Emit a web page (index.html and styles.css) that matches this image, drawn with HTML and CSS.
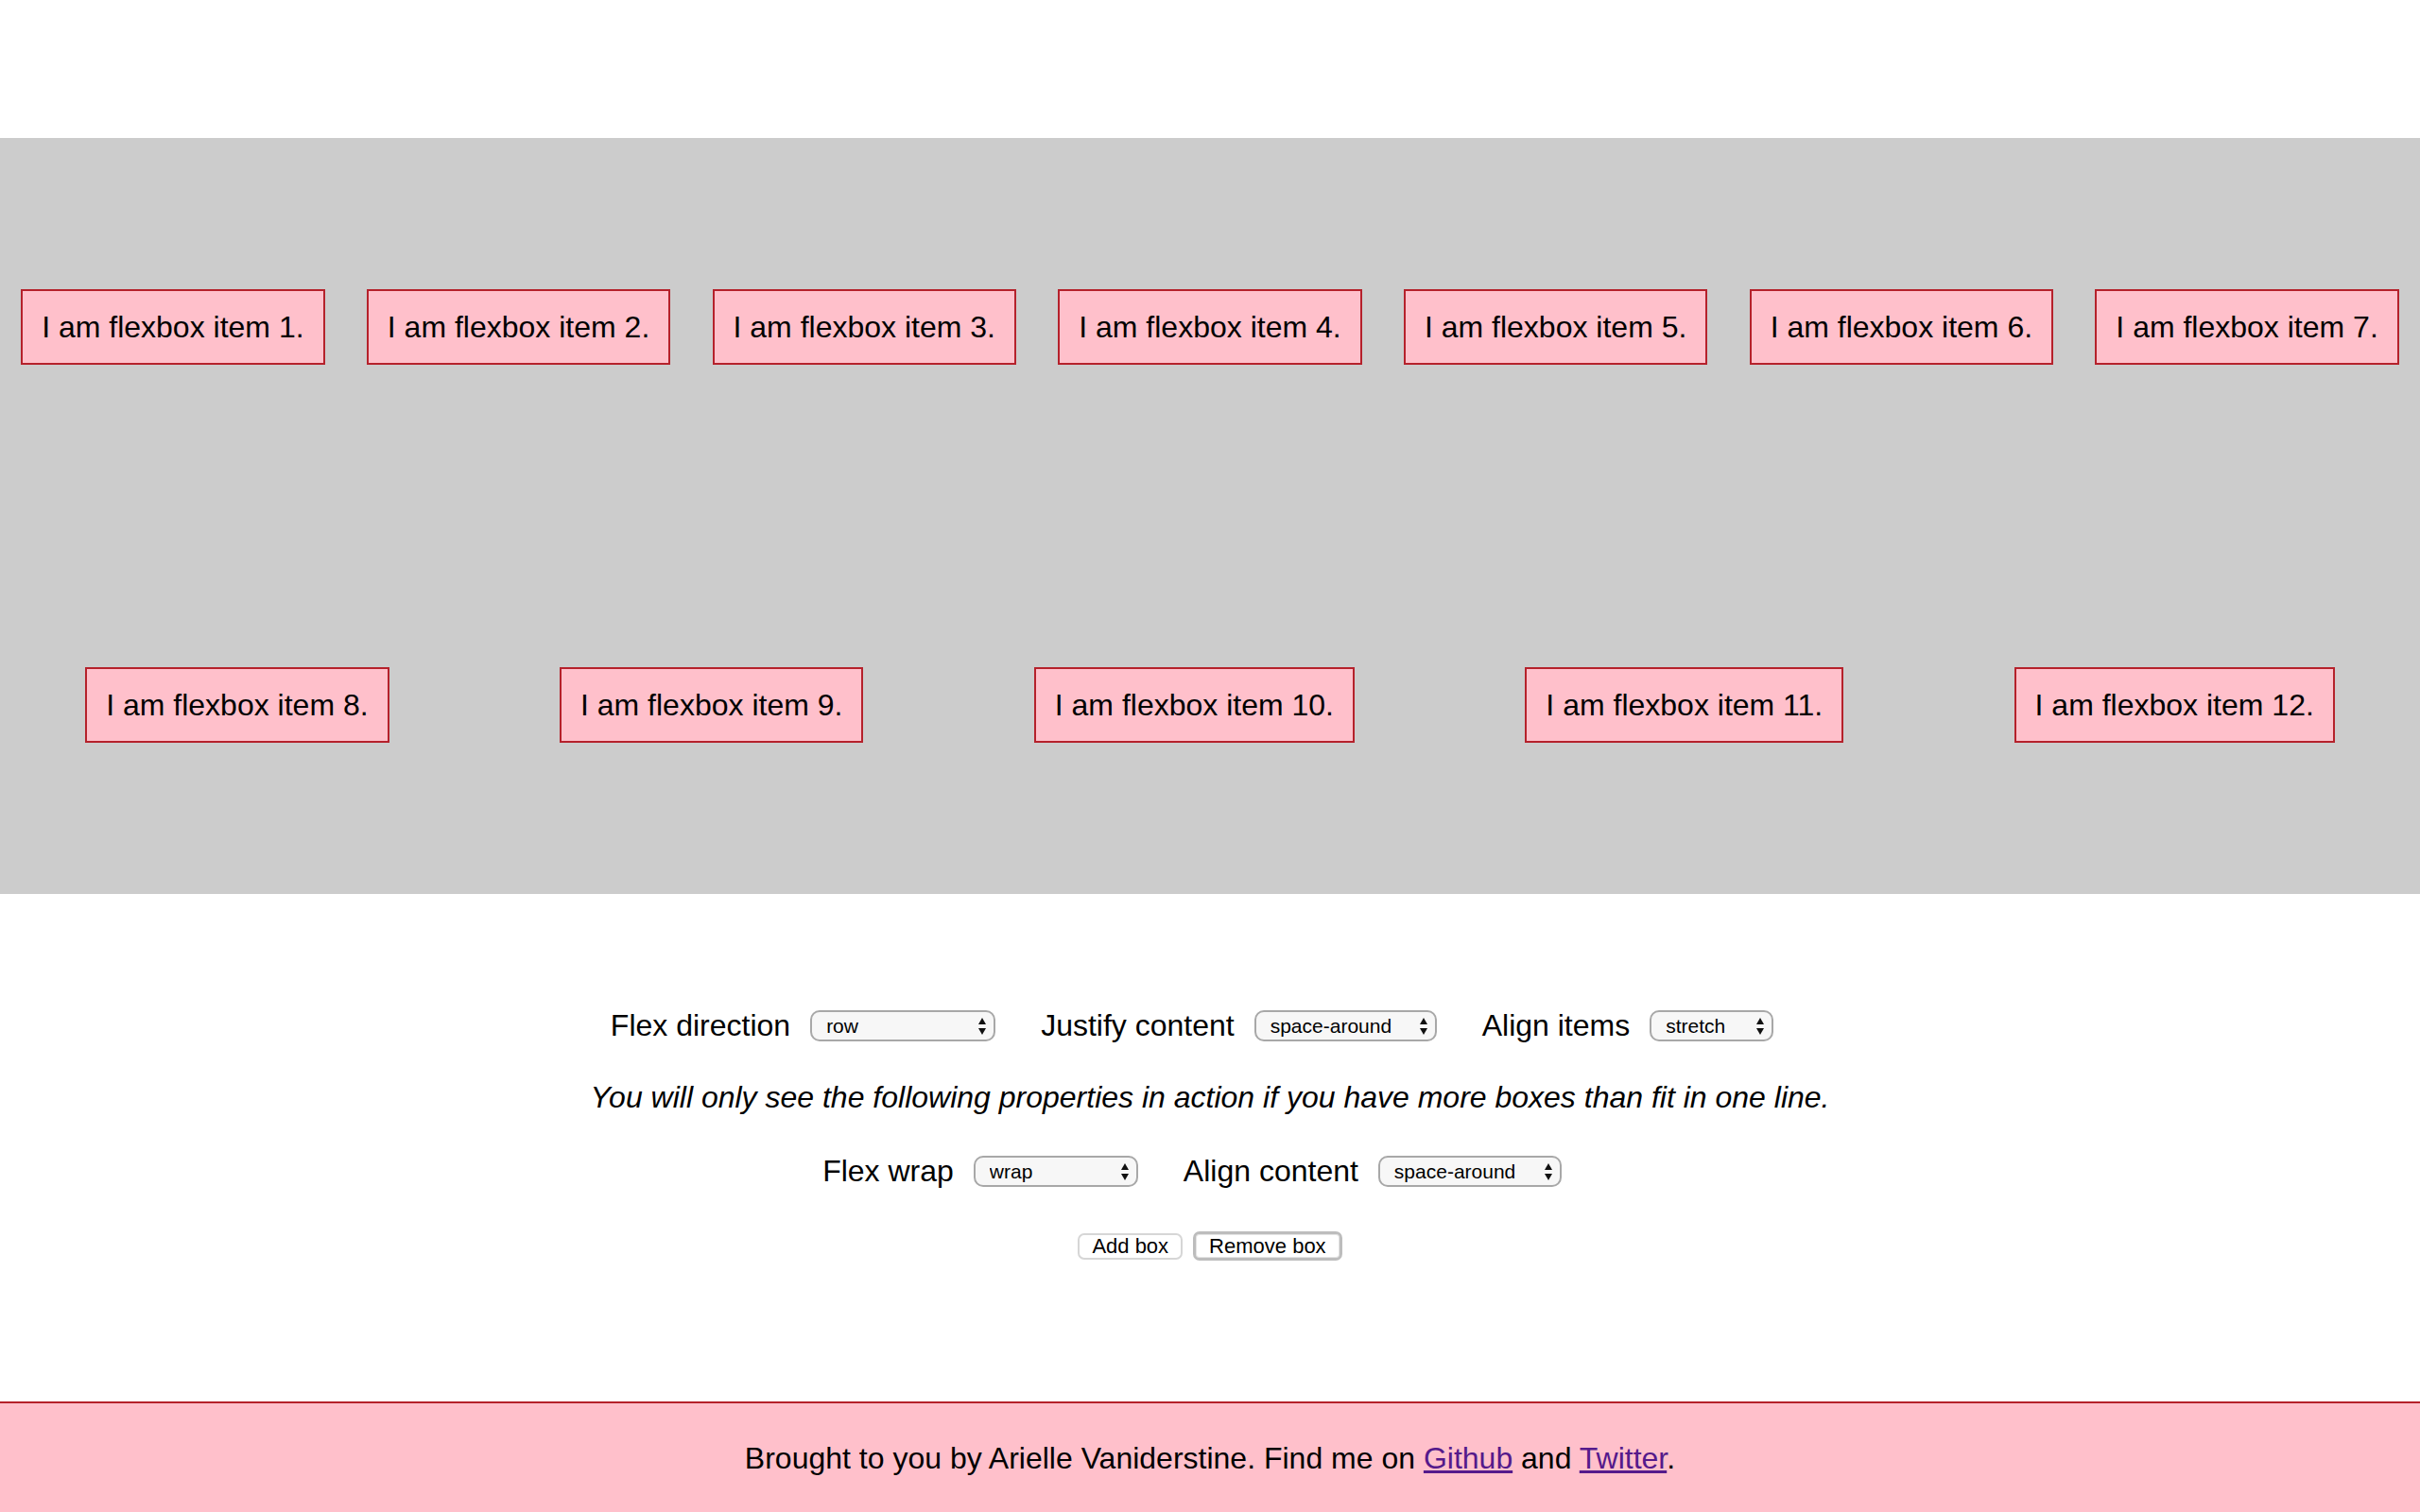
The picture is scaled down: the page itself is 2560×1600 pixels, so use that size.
FILE: index.html
```html
<!DOCTYPE html>
<html lang="en">
<head>
<meta charset="utf-8">
<title>Flexbox playground</title>
<link rel="stylesheet" href="styles.css">
</head>
<body>
<main class="flex-container">
  <div class="item">I am flexbox item 1.</div>
  <div class="item">I am flexbox item 2.</div>
  <div class="item">I am flexbox item 3.</div>
  <div class="item">I am flexbox item 4.</div>
  <div class="item">I am flexbox item 5.</div>
  <div class="item">I am flexbox item 6.</div>
  <div class="item">I am flexbox item 7.</div>
  <div class="item">I am flexbox item 8.</div>
  <div class="item">I am flexbox item 9.</div>
  <div class="item">I am flexbox item 10.</div>
  <div class="item">I am flexbox item 11.</div>
  <div class="item">I am flexbox item 12.</div>
</main>

<section class="controls">
  <div class="row row-first">
    <div class="group">
      <label class="label" for="dir">Flex direction</label>
      <span class="sel"><select id="dir" class="w-dir">
        <option>row</option><option>row-reverse</option><option>column</option><option>column-reverse</option>
      </select></span>
    </div>
    <div class="group">
      <label class="label" for="jc">Justify content</label>
      <span class="sel"><select id="jc" class="w-jc">
        <option>flex-start</option><option>flex-end</option><option>center</option><option>space-between</option><option selected>space-around</option>
      </select></span>
    </div>
    <div class="group">
      <label class="label" for="ai">Align items</label>
      <span class="sel"><select id="ai" class="w-ai">
        <option>flex-start</option><option>flex-end</option><option>center</option><option>baseline</option><option selected>stretch</option>
      </select></span>
    </div>
  </div>

  <p class="note">You will only see the following properties in action if you have more boxes than fit in one line.</p>

  <div class="row row-second">
    <div class="group">
      <label class="label" for="fw">Flex wrap</label>
      <span class="sel"><select id="fw" class="w-fw">
        <option>nowrap</option><option selected>wrap</option><option>wrap-reverse</option>
      </select></span>
    </div>
    <div class="group">
      <label class="label" for="ac">Align content</label>
      <span class="sel"><select id="ac" class="w-ac">
        <option>flex-start</option><option>flex-end</option><option>center</option><option>space-between</option><option selected>space-around</option><option>stretch</option>
      </select></span>
    </div>
  </div>

  <div class="buttons">
    <button class="btn" type="button">Add box</button>
    <button class="btn btn-focus" type="button">Remove box</button>
  </div>
</section>

<footer class="footer">
  Brought to you by Arielle Vaniderstine. Find me on <a href="#" class="link">Github</a> and <a href="#" class="link">Twitter</a>.
</footer>
</body>
</html>
```

FILE: styles.css
```css
html, body {
  margin: 0;
  padding: 0;
  background: #ffffff;
}

body {
  font-family: "Liberation Sans", Arial, Helvetica, sans-serif;
  font-size: 32px;
  line-height: 37px;
  color: #000000;
}

.flex-container {
  margin-top: 146px;
  height: 800px;
  background: #cccccc;
  display: flex;
  flex-direction: row;
  flex-wrap: wrap;
  justify-content: space-around;
  align-content: space-around;
  align-items: stretch;
}

.item {
  background: #ffc0cb;
  border: 2px solid #b5212b;
  padding: 20px;
  font-size: 32px;
  line-height: 36px;
  white-space: nowrap;
}

.controls {
  display: flex;
  flex-direction: column;
  align-items: center;
}

.row {
  display: flex;
  align-items: center;
  justify-content: center;
  gap: 48px;
  padding-right: 38px;
  height: 37px;
}

.row-first {
  margin-top: 121px;
}

.row-second {
  margin-top: 41px;
}

.group {
  display: flex;
  align-items: center;
  gap: 21px;
}

.label {
  font-size: 32px;
  line-height: 37px;
  white-space: nowrap;
}

.sel {
  position: relative;
  display: inline-flex;
}

.sel::before,
.sel::after {
  content: "";
  position: absolute;
  right: 10px;
  width: 0;
  height: 0;
  border-left: 4px solid transparent;
  border-right: 4px solid transparent;
  pointer-events: none;
}

.sel::before {
  top: calc(50% - 9px);
  border-bottom: 7px solid #111111;
}

.sel::after {
  top: calc(50% + 2px);
  border-top: 7px solid #111111;
}

select {
  -webkit-appearance: none;
  appearance: none;
  box-sizing: border-box;
  height: 33px;
  margin: 0;
  padding: 0 30px 0 15px;
  border: 2px solid #a8a8a8;
  border-radius: 10px;
  background: #f7f7f7;
  font-family: "Liberation Sans", Arial, Helvetica, sans-serif;
  font-size: 21px;
  color: #000000;
  line-height: 29px;
}

.w-dir { width: 196px; }
.w-jc  { width: 193px; }
.w-ai  { width: 131px; }
.w-fw  { width: 174px; }
.w-ac  { width: 194px; }

.note {
  margin: 39px 0 0 0;
  font-style: italic;
  font-size: 32px;
  line-height: 37px;
  text-align: center;
  white-space: nowrap;
}

.buttons {
  margin-top: 45px;
  display: flex;
  align-items: center;
  justify-content: center;
  gap: 11px;
  height: 31px;
}

.btn {
  box-sizing: border-box;
  height: 28px;
  margin: 0;
  padding: 0 13px;
  border: 2px solid #d6d6d6;
  border-radius: 7px;
  background: #ffffff;
  font-family: "Liberation Sans", Arial, Helvetica, sans-serif;
  font-size: 22px;
  line-height: 24px;
  color: #000000;
}

.btn-focus {
  height: 31px;
  padding: 0 14px;
  border: 3px solid #bdbdbd;
  box-shadow: inset 0 0 0 1px #e4e4e4;
}

.footer {
  margin-top: 149px;
  border-top: 2px solid #b5212b;
  background: #ffc0cb;
  padding: 40px 0 42px 0;
  text-align: center;
  font-size: 32px;
  line-height: 37px;
}

.link {
  color: #551a8b;
  text-decoration: underline;
}
```
